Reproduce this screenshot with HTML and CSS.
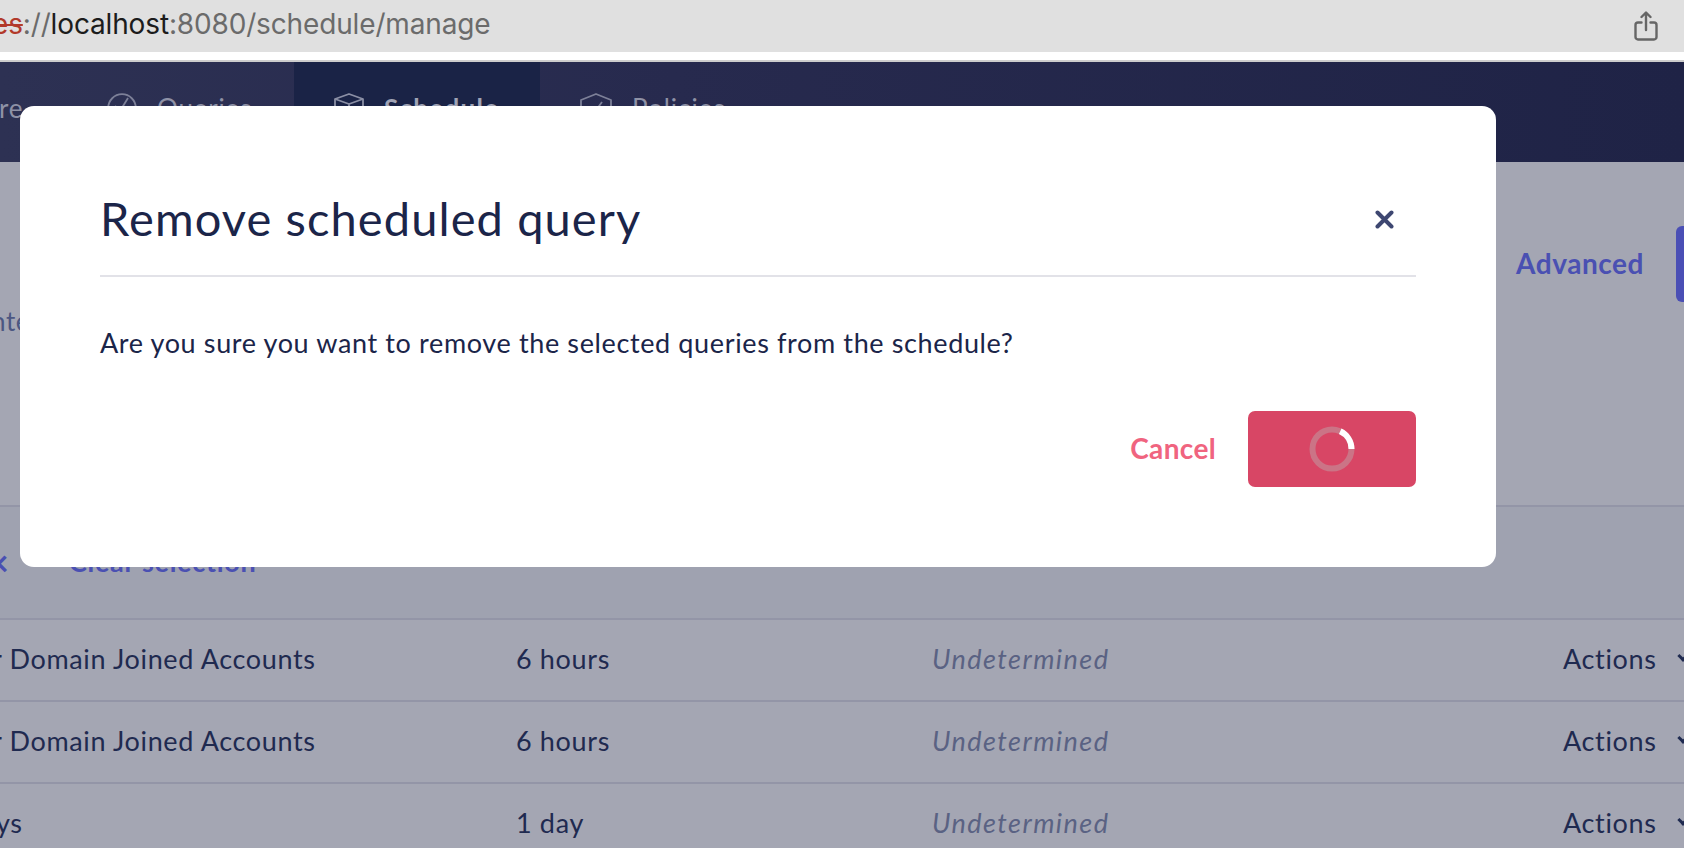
FILE: index.html
```html
<!DOCTYPE html>
<html lang="en">
<head>
<meta charset="utf-8">
<title>Manage schedule</title>
<link rel="stylesheet" href="styles.css">
</head>
<body>
<header class="address-bar">
  <div class="url"><span class="url-scheme">es</span><span class="url-dim">://</span><span class="url-host">localhost</span><span class="url-dim">:8080/schedule/manage</span></div>
  <svg class="share" width="24" height="30" viewBox="0 0 24 30" fill="none" stroke="#666" stroke-width="2.4" stroke-linecap="round" stroke-linejoin="round"><path d="M7.5 11.5H4a2.5 2.5 0 0 0-2.5 2.500V26a2.500 2.500 0 0 0 2.500 2.500h16a2.500 2.500 0 0 0 2.500-2.500V14a2.500 2.500 0 0 0-2.500-2.500h-3.500"/><path d="M12 19V2M7.500 6 12 1.500 16.500 6"/></svg>
</header>
<div class="strip"></div>
<nav class="nav">
  <div class="nav-item nav-first">re</div>
  <div class="nav-item nav-queries">
    <svg width="30" height="30" viewBox="0 0 30 30" fill="none" stroke="#7d8098" stroke-width="1.800"><circle cx="15" cy="15" r="13.800"/><path d="M8 13l5 5L21 5"/></svg>
    <span>Queries</span>
  </div>
  <div class="nav-item nav-active">
    <svg width="30" height="30" viewBox="0 0 30 30" fill="none" stroke="#8b8fa5" stroke-width="1.800" stroke-linejoin="round"><path d="M15 1 29 6v18l-14 5-14-5V6z"/><path d="M1 6l14 5 14-5M15 11v18"/></svg>
    <span>Schedule</span>
  </div>
  <div class="nav-item nav-policies">
    <svg width="32" height="32" viewBox="0 0 32 32" fill="none" stroke="#7d8098" stroke-width="1.800" stroke-linejoin="round"><path d="M16 1 31 7v12c0 6-7 10-15 12C8 29 1 25 1 19V7z"/><path d="M9 15l5 5 8-11"/></svg>
    <span>Policies</span>
  </div>
</nav>
<main class="content">
  <section class="toolbar">
    <div class="intro">nte</div>
    <div class="toolbar-actions">
      <span class="advanced">Advanced</span>
      <span class="primary-btn"></span>
    </div>
  </section>
  <section class="selection-row">
    <span class="selection-x">×</span>
    <span class="selection-clear">Clear selection</span>
  </section>
  <div class="row">
    <span class="cell-name">r Domain Joined Accounts</span>
    <span class="cell-time">6 hours</span>
    <span class="cell-status">Undetermined</span>
    <span class="cell-actions">Actions<i class="caret"></i></span>
  </div>
  <div class="row">
    <span class="cell-name">r Domain Joined Accounts</span>
    <span class="cell-time">6 hours</span>
    <span class="cell-status">Undetermined</span>
    <span class="cell-actions">Actions<i class="caret"></i></span>
  </div>
  <div class="row">
    <span class="cell-name cell-short">ys</span>
    <span class="cell-time">1 day</span>
    <span class="cell-status">Undetermined</span>
    <span class="cell-actions">Actions<i class="caret"></i></span>
  </div>
</main>
<div class="modal" role="dialog">
  <div class="modal-head">
    <h1 class="modal-title">Remove scheduled query</h1>
    <svg class="modal-close" width="19" height="19" viewBox="0 0 19 19" fill="none" stroke="#3e4771" stroke-width="4" stroke-linecap="round"><path d="M2.500 2.500l14 14M16.500 2.500l-14 14"/></svg>
  </div>
  <p class="modal-text">Are you sure you want to remove the selected queries from the schedule?</p>
  <div class="modal-actions">
    <span class="cancel">Cancel</span>
    <span class="confirm">
      <svg width="46" height="46" viewBox="0 0 46 46" fill="none" stroke-width="6"><circle cx="23" cy="23" r="19.500" stroke="#cb7486"/><path d="M31.240 5.330A19.500 19.500 0 0 1 42.500 23" stroke="#fff"/></svg>
    </span>
  </div>
</div>
</body>
</html>
```
FILE: styles.css
```css
* { box-sizing: border-box; }
html, body { margin: 0; padding: 0; }
body {
  width: 1684px;
  height: 848px;
  overflow: hidden;
  background: #a4a6b3;
  font-family: "Lato", "Noto Sans", sans-serif;
  color: #1f2a50;
  position: relative;
}
.address-bar {
  height: 52px;
  background: #e0e0e0;
  display: flex;
  align-items: center;
  justify-content: space-between;
  padding: 0 26px 0 0;
}
.url {
  font-family: "Inter", "Liberation Sans", sans-serif;
  font-size: 28px;
  margin: -4px 0 0 -8px;
  white-space: nowrap;
  letter-spacing: -0.15px;
}
.url-scheme { color: #b23a2a; text-decoration: line-through; }
.url-dim { color: #6b6b6b; }
.url-host { color: #1c1c1c; }
.strip { height: 10px; background: #fff; border-bottom: 2px solid #cdcdcd; }
.nav {
  height: 100px;
  display: flex;
  background: linear-gradient(90deg, #2d3153 0%, #272a4e 40%, #1f2346 100%);
  color: #8f92a6;
  font-size: 26px;
  letter-spacing: 0.8px;
}
.nav-item { display: flex; gap: 20px; padding-top: 30px; height: 100%; white-space: nowrap; }
.nav-item svg { margin-top: 1px; }
.nav-first { width: 108px; margin-left: -1px; }
.nav-queries { width: 187px; }
.nav-active { width: 246px; padding-left: 40px; background: #1a2346; font-weight: 700; color: #a0a3b5; letter-spacing: 1.3px; }
.nav-policies { padding-left: 40px; letter-spacing: 1px; }
.toolbar {
  height: 345px;
  display: flex;
  justify-content: space-between;
  align-items: flex-start;
  border-bottom: 2px solid #9395a7;
}
.intro { margin: 143px 0 0 -9px; font-size: 26px; letter-spacing: 0.6px; color: #4c5782; }
.toolbar-actions { display: flex; align-items: center; gap: 32px; padding-top: 64px; margin-right: -52px; }
.advanced { font-size: 28px; font-weight: 700; letter-spacing: 0.55px; color: #4a50b2; margin-top: -2px; }
.primary-btn { width: 60px; height: 76px; border-radius: 6px; background: #4a4fb5; }
.selection-row {
  height: 113px;
  background: #9fa2b0;
  border-bottom: 2px solid #9395a7;
  display: flex;
  align-items: flex-start;
  padding-top: 38px;
  color: #4a50b2;
  font-weight: 700;
  font-size: 27px;
  letter-spacing: 0.7px;
}
.selection-x { margin-left: -12px; width: 81px; font-size: 36px; line-height: 34px; }
.row {
  height: 82px;
  display: flex;
  align-items: center;
  padding-bottom: 4px;
  font-size: 27px;
  letter-spacing: 0.65px;
  border-bottom: 2px solid #9395a7;
  white-space: nowrap;
}
.cell-name { margin-left: -8px; flex: 0 0 524px; }
.cell-short { margin-left: -4px; flex-basis: 520px; }
.cell-time { flex: 0 0 416px; }
.cell-status { flex: 0 0 631px; font-style: italic; letter-spacing: 1.45px; color: #5a6283; }
.cell-actions { display: flex; align-items: center; gap: 22px; }
.caret { width: 8px; height: 8px; border-right: 3px solid #1f2a50; border-bottom: 3px solid #1f2a50; transform: rotate(45deg); margin-top: -4px; }
.modal {
  position: absolute;
  left: 20px;
  top: 106px;
  width: 1476px;
  height: 461px;
  background: #fff;
  border-radius: 14px;
  padding: 0 80px;
}
.modal-head {
  height: 171px;
  border-bottom: 2px solid #e2e2e8;
  display: flex;
  align-items: flex-start;
  justify-content: space-between;
  padding: 0 22px 0 0;
}
.modal-title { margin: 84px 0 0 0; font-size: 47px; line-height: 56px; font-weight: 400; letter-spacing: 1.1px; color: #1b2549; }
.modal-close { margin-top: 104px; }
.modal-text { margin: 48px 0 0; font-size: 27px; line-height: 36px; letter-spacing: 0.63px; color: #1b2549; }
.modal-actions { display: flex; justify-content: flex-end; align-items: center; gap: 32px; margin-top: 50px; }
.cancel { color: #f0647f; font-size: 28px; font-weight: 700; letter-spacing: 0.35px; margin-top: -2px; }
.confirm { width: 168px; height: 76px; background: #d84665; border-radius: 7px; display: flex; align-items: center; justify-content: center; }
```
